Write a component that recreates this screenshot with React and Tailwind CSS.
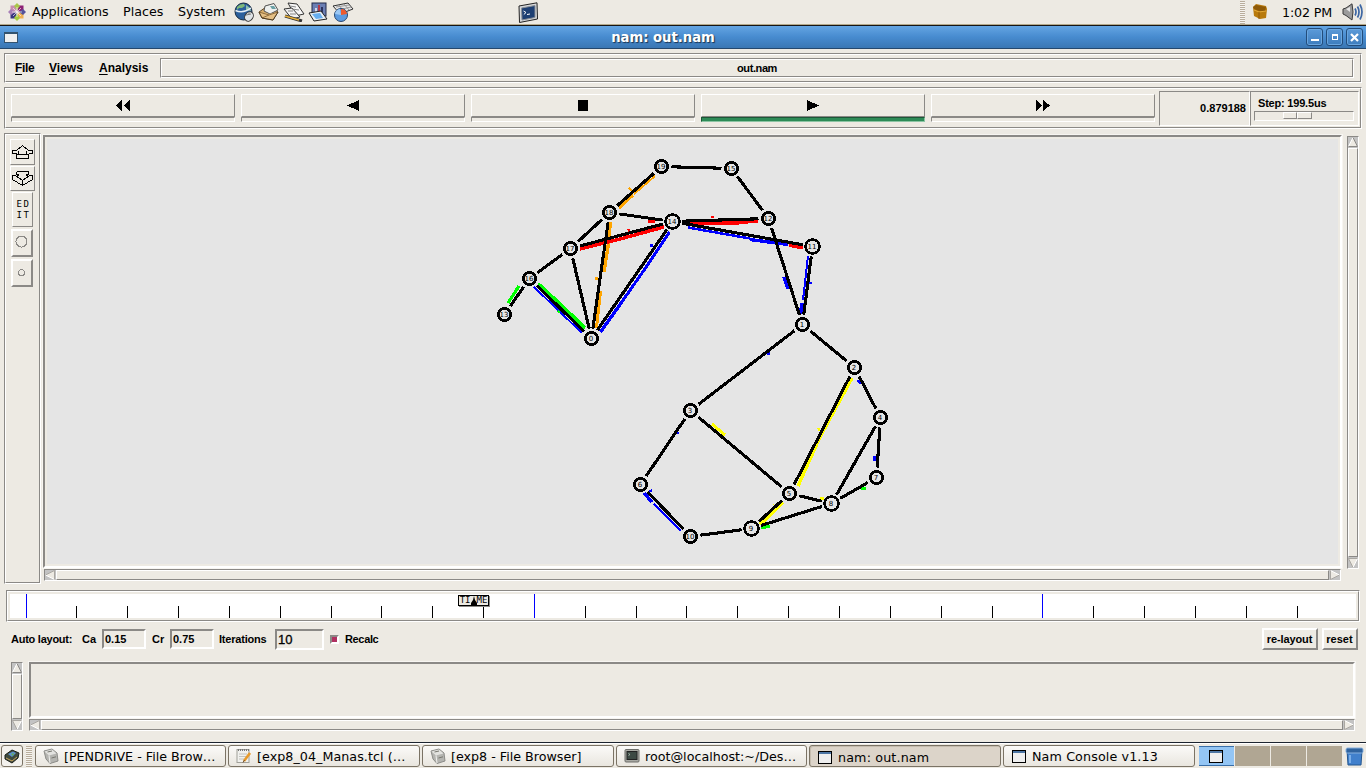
import React from "react";

const SUNK = "border border-t-[#8b8986] border-l-[#8b8986] border-b-white border-r-white";
const RAISED = "border border-t-white border-l-white border-b-[#8b8986] border-r-[#8b8986]";
const SUNK2 = "border-2 border-t-[#8b8986] border-l-[#8b8986] border-b-white border-r-white";
const RAISED2 = "border-2 border-t-white border-l-white border-b-[#8b8986] border-r-[#8b8986]";

function Groove({ className = "", inner = "", children }) {
  return (
    <div className={`${SUNK} flex ${className}`}>
      <div className={`${RAISED} flex min-w-0 flex-1 ${inner}`}>{children}</div>
    </div>
  );
}

function Arrow({ dir }) {
  const rot = { up: 0, right: 90, down: 180, left: 270 }[dir];
  return (
    <svg className="h-[10px] w-[10px] shrink-0" viewBox="0 0 10 10">
      <g transform={`rotate(${rot} 5 5)`}>
        <path d="M5 .5 L9.5 9.5 H.5Z" fill="#edeae3" />
        <path d="M5 .5 L.5 9.5" stroke="#fff" fill="none" />
        <path d="M5 .5 L9.5 9.5 H.5" stroke={dir === "up" ? "#8b8986" : "#aaa7a2"} fill="none" />
      </g>
    </svg>
  );
}

function Scrollbar({ vertical, className = "" }) {
  return (
    <div className={`${SUNK} flex gap-px bg-[#c3c3c3] ${vertical ? "w-3 flex-col" : "h-3"} ${className}`}>
      <Arrow dir={vertical ? "up" : "left"} />
      <div className={`${RAISED} flex-1 bg-[#edeae3]`} />
      <Arrow dir={vertical ? "down" : "right"} />
    </div>
  );
}

function GlobeIcon() {
  return (
    <svg width="21" height="20" viewBox="0 0 21 20">
      <circle cx="9.5" cy="9.5" r="8.5" fill="#2b5f9c" stroke="#16293d" />
      <path d="M3 5 Q6 1.500 10 2 L11 4 L8 6 L5 6 L3 8Z" fill="#7db87a" />
      <path d="M12 3 L16 6 L17 9 L12 8Z" fill="#8fc0b0" />
      <path d="M1.500 8.500 Q9 12 17 6" stroke="#e6eef5" strokeWidth="1.500" fill="none" />
      <ellipse cx="15" cy="14.5" rx="4" ry="5" fill="#dfe3e6" stroke="#333" transform="rotate(35 15 14.5)" />
      <path d="M12 13 L17 12 M15 12.500 L15 10" stroke="#777" />
    </svg>
  );
}
function MailIcon() {
  return (
    <svg width="22" height="20" viewBox="0 0 22 20">
      <path d="M1 10 L11 3 L20 10 L15 18 L4 16Z" fill="#d8ae6c" stroke="#5d4526" />
      <path d="M7 4 L16 1.500 L20 8 L12 12 L6 9Z" fill="#eef0ee" stroke="#555" />
      <path d="M12 4 L16 4 L18 7 L14 7Z" fill="#6aa0a5" />
      <path d="M1 10 L11 12 L20 10 L15 18 L4 16Z" fill="#e4bf84" />
      <path d="M1 10 L11 13 L20 10 M11 13 L4 16" stroke="#8f6c3c" fill="none" />
      <path d="M1 10 L4 16 L15 18 L20 10" stroke="#4d3a20" fill="none" />
    </svg>
  );
}
function WriterIcon() {
  return (
    <svg width="22" height="20" viewBox="0 0 22 20">
      <path d="M5 1 L14 2 L21 12 L12 14Z" fill="#f7f7f7" stroke="#333" />
      <path d="M1 7 L9 6 L17 15 L9 17Z" fill="#f2f2f2" stroke="#333" />
      <path d="M7 4 L13 5 M9 7 L16 8 M5 9 L10 9 M7 12 L13 12" stroke="#888" />
      <path d="M2 14 L19 19" stroke="#333" strokeWidth="3" />
      <path d="M2 14 L16 18" stroke="#e8b23c" strokeWidth="1.6" />
    </svg>
  );
}
function ImpressIcon() {
  return (
    <svg width="21" height="20" viewBox="0 0 21 20">
      <rect x="4" y="1" width="14" height="13" fill="#6b7fb4" stroke="#222a4a" />
      <rect x="7" y="6" width="2" height="6" fill="#d3d8ea" />
      <rect x="10" y="3" width="2" height="9" fill="#b33a4a" />
      <rect x="13" y="5" width="2" height="6" fill="#2a3260" />
      <path d="M1 11 L13 9 L19 17 L6 19Z" fill="#e7eef5" stroke="#222" />
      <path d="M4 12 L12 11 L15 16 L8 17Z" fill="#67aef0" />
    </svg>
  );
}
function CalcIcon() {
  return (
    <svg width="22" height="20" viewBox="0 0 22 20">
      <path d="M1 4 L16 1 L21 7 L8 12Z" fill="#e6e6e6" stroke="#333" />
      <path d="M4 5 L17 3 M6 8 L19 5 M7 3 L12 10 M12 2 L17 8" stroke="#999" />
      <circle cx="9" cy="13" r="6.5" fill="#5c9be0" stroke="#27466e" />
      <path d="M9 13 V7 A6 6 0 0 1 15 12Z" fill="#ee5a2c" />
      <path d="M9 13 L3 12 A6 6 0 0 1 8 7Z" fill="#9cc8f4" />
    </svg>
  );
}
function CentosIcon() {
  return (
    <svg width="18" height="18" viewBox="0 0 18 18">
      <rect x="2.5" y="2.5" width="6" height="6" fill="#c98bb0" />
      <rect x="9.5" y="2.5" width="6" height="6" fill="#8d2175" />
      <rect x="2.5" y="9.5" width="6" height="6" fill="#39367e" />
      <rect x="9.5" y="9.5" width="6" height="6" fill="#efb052" />
      <path d="M9 0 L12 3 L9 7 L6 3Z" fill="#a9c64a" />
      <path d="M9 11 L12 15 L9 18 L6 15Z" fill="#a5cc3e" />
      <path d="M0 9 L3 6 L7 9 L3 12Z" fill="#a880b8" />
      <path d="M11 9 L15 6 L18 9 L15 12Z" fill="#54539b" />
      <path d="M9 4 V14 M4 9 H14 M5 5 L13 13 M13 5 L5 13" stroke="#f5f0f0" strokeWidth=".7" />
    </svg>
  );
}
function ConsoleIcon() {
  return (
    <svg width="21" height="21" viewBox="0 0 21 21">
      <path d="M1 4 L19 .8 L19.5 17 L1.5 20.5Z" fill="#d6d8da" stroke="#222" />
      <path d="M3.5 6 L17 3.5 L17 15.5 L4 18Z" fill="#1d3f73" stroke="#8a8f96" />
      <path d="M5.5 9 L8 10.5 L5.8 12.5 M9 12.5 L12 12" stroke="#fff" fill="none" />
    </svg>
  );
}
function BoxIcon() {
  return (
    <svg width="16" height="16" viewBox="0 0 16 16">
      <path d="M1 3 L4 0 L14 2 L15 5 L14 14 L8 15 L2 12Z" fill="#b87a0c" />
      <path d="M1 3 L4 1 L14 3 L13 7 L7 7 L2 5Z" fill="#8e5a08" />
      <path d="M2 6 L7 8 L14 7" stroke="#e3a938" fill="none" />
      <path d="M7 8 V15" stroke="#8e5a08" />
    </svg>
  );
}
function SpeakerIcon() {
  return (
    <svg width="21" height="18" viewBox="0 0 21 18">
      <path d="M1 6 L4 5 L10 .8 Q12 9 10 17 L4 12.5 L1 11Z" fill="#9b9b9b" stroke="#3b3b3b" />
      <path d="M4 6 L8 4 V9Z" fill="#e6e6e6" />
      <path d="M13 5.500 Q15 9 13 12.500 M15.500 3.500 Q18.500 9 15.500 14.500 M18 1.500 Q22 9 18 16.500" stroke="#3c66a3" strokeWidth="1.7" fill="none" />
    </svg>
  );
}
function WindowIcon() {
  return (
    <svg width="14" height="13" viewBox="0 0 14 13" shapeRendering="crispEdges">
      <rect width="14" height="13" fill="#000" />
      <rect x="1" y="1" width="12" height="11" fill="#efefef" />
      <rect x="1" y="1" width="12" height="2" fill="#4d76a5" />
    </svg>
  );
}
function FolderIcon() {
  return (
    <svg width="16" height="16" viewBox="0 0 16 16">
      <path d="M1 3 L9 1 L14 5 L15 13 L7 15.500 L3 11Z" fill="#b4b4b0" stroke="#8b8b87" />
      <path d="M1.500 3.500 L9 1.500 L13.500 5.500 L6 7.500Z" fill="#e2e2df" />
      <path d="M6 7.500 L7 15" stroke="#f0f0ee" />
      <path d="M8.500 10 L13 8.800 M4.500 4 L9 3" stroke="#77776f" />
    </svg>
  );
}
function NotepadIcon() {
  return (
    <svg width="16" height="16" viewBox="0 0 16 16">
      <rect x="1" y="1.500" width="12" height="13" fill="#f1f1ee" stroke="#a09f98" />
      <path d="M2 2 H13" stroke="#777" strokeWidth="2" strokeDasharray="1 1" />
      <path d="M3 6 H11 M3 8.500 H11 M3 11 H8" stroke="#c2c2bd" />
      <path d="M14 5 L8 13" stroke="#e79a2c" strokeWidth="2.600" />
      <path d="M8.500 12 L7 14.500" stroke="#6b4a28" />
    </svg>
  );
}
function TerminalIcon() {
  return (
    <svg width="16" height="16" viewBox="0 0 16 16">
      <rect x="1" y="1.500" width="14" height="12.500" rx="1" fill="#a9aaa4" stroke="#6c6d68" />
      <rect x="3" y="3.500" width="10" height="8" fill="#3d4a44" stroke="#222" />
      <path d="M4.500 5.500 L6 6.500 L4.500 7.500" stroke="#b5c8ba" fill="none" strokeWidth=".8" />
    </svg>
  );
}
function DesktopIcon() {
  return (
    <svg width="16" height="15" viewBox="0 0 16 15">
      <path d="M1 6 L8 1 L15 4 L14 9 L8 14 L1 10Z" fill="#3f4a3d" stroke="#1c201a" />
      <path d="M4 5 L9 2.500 L12 4 L8 8Z" fill="#5b8fd0" />
      <path d="M7 5 L10 4 L9 7Z" fill="#67b04c" />
      <path d="M2 9 L8 12 L13 8" stroke="#c9a55f" fill="none" />
    </svg>
  );
}
function TrashIcon() {
  return (
    <svg width="19" height="19" viewBox="0 0 19 19">
      <path d="M2 3 H17 L16 18 H3Z" fill="#4180cc" stroke="#24568f" />
      <rect x="1" y="1" width="17" height="5" rx="1.500" fill="#2f639f" stroke="#88b1de" />
      <path d="M5 8 V16" stroke="#7bafe9" strokeWidth="2" />
    </svg>
  );
}

const nodes = {
  0: [591.5, 338.5], 1: [802.5, 324.5], 2: [854.5, 367.5], 3: [690.5, 410.5], 4: [880.5, 417.5],
  5: [789.5, 493.5], 6: [640.5, 484.5], 7: [876.5, 477.5], 8: [831.5, 503.5, 1], 9: [751.5, 528.5, 1],
  10: [690.5, 536.5], 11: [812.5, 246.5, 1], 12: [768.5, 218.5], 13: [504.5, 314.5], 14: [672.5, 221.5, 1],
  15: [731.5, 168.5], 16: [529.5, 278.5], 17: [570.5, 248.5], 18: [609.5, 212.5], 19: [661.5, 166.5],
};
const links = [
  [19, 15], [15, 12], [19, 18], [18, 14], [18, 17], [17, 14], [17, 16], [16, 13], [16, 0], [17, 0],
  [18, 0], [14, 0], [14, 12], [14, 11], [12, 1], [11, 1], [1, 3], [1, 2], [2, 4], [2, 5], [4, 7],
  [4, 8], [7, 8], [5, 8], [3, 5], [3, 6], [6, 10], [10, 9], [9, 5], [9, 8],
];
const O = "#ffa500", R = "#ff0000", B = "#0000ff", G = "#00ff00", Y = "#ffff00";
const packets = [
  [655, 176, 634, 194, O, 2], [633, 195, 619, 208, O, 3], [629, 188, 632, 191, O, 2],
  [610.5, 222, 608, 247, O, 3.3], [608, 247, 604, 272, O, 3.3], [600.5, 291, 596.5, 328, O, 3], [595, 278.5, 598, 278.5, O, 3],
  [580, 249, 620, 239, R, 3.4], [620, 239, 664, 227, R, 3.4], [648, 221, 655, 221, R, 3], [628, 229, 630, 232, R, 2],
  [682, 223.5, 748, 222.7, R, 3.4], [748, 222, 758, 221.5, R, 3], [711, 217, 714, 217, R, 2],
  [688, 227.5, 750, 238.5, B, 2.5], [750, 239.5, 788, 244.5, B, 3.4], [789, 245.5, 803, 248, R, 3],
  [669.5, 232, 645.5, 268, B, 3], [645.5, 268, 622.5, 301, B, 3], [622.5, 301, 600.5, 332, B, 3.4], [650, 245.5, 653, 245.5, B, 3],
  [538, 284, 549, 294, G, 4], [549, 294, 585, 328, G, 4], [534, 287, 582, 333, B, 2], [558, 311, 560, 313, G, 2],
  [519, 286, 508, 303, G, 3.2],
  [784, 277, 788, 289, B, 3.2], [808, 256, 803, 300, B, 2], [802, 303, 801, 314, B, 4], [809, 283, 812, 283, B, 2],
  [767, 353.5, 770, 353.5, B, 3], [675, 433, 679, 433, B, 2], [858, 380, 861, 384, B, 3], [874.5, 456, 874.5, 461, B, 4],
  [644, 493, 652, 502, B, 3.5], [654, 504, 681, 531, B, 2.6], [649, 492, 652, 490, B, 2],
  [852, 378, 820, 437, Y, 3.4], [820, 437, 798, 486, Y, 3.4], [818, 428, 820, 431, Y, 2],
  [712, 424, 725, 435, Y, 3], [783, 502.5, 760, 524.5, Y, 3.6], [773, 504, 775, 506, Y, 1], [820, 498, 824, 498, Y, 3],
  [761, 528, 770, 526, G, 3], [861, 488, 866, 488, G, 3],
];

function Topology() {
  return (
    <svg className="block h-full w-full" viewBox="47 139 1291 425" preserveAspectRatio="xMinYMin meet">
      <g shapeRendering="crispEdges">
        {packets.map(([x1, y1, x2, y2, c, w], i) => (
          <line key={i} x1={x1} y1={y1} x2={x2} y2={y2} stroke={c} strokeWidth={w} />
        ))}
        {links.map(([a, b]) => {
          const [x1, y1] = nodes[a];
          const [x2, y2] = nodes[b];
          const d = Math.hypot(x2 - x1, y2 - y1);
          const ux = ((x2 - x1) / d) * 10;
          const uy = ((y2 - y1) / d) * 10;
          return <line key={`${a}-${b}`} x1={x1 + ux} y1={y1 + uy} x2={x2 - ux} y2={y2 - uy} stroke="#000" strokeWidth="3.100" />;
        })}
        {Object.entries(nodes).map(([id, [x, y, big]]) => (
          <circle key={id} cx={x} cy={y} r={big ? 7 : 6.2} fill="#e5e5e5" stroke="#000" strokeWidth="2.5" />
        ))}
      </g>
      {Object.entries(nodes).map(([id, [x, y]]) => (
        <text key={id} x={x - 0.5} y={y + 2.5} textAnchor="middle" fontFamily="'DejaVu Sans', sans-serif" fontWeight="400" fontSize="7">
          {id}
        </text>
      ))}
    </svg>
  );
}

const playIcons = [
  "M122 100 V111 L116 105.5Z M130 100 V111 L124 105.5Z",
  "M129 100 V111 L117 105.5Z",
  "M118 100 H128 V111 H118Z",
  "M117 100 V111 L129 105.5Z",
  "M116 100 V111 L122 105.5Z M123 100 V111 L130 105.5Z",
];

function PlayButton({ d, active }) {
  return (
    <div className="w-56">
      <div className={`${RAISED} flex h-[23px] justify-center`}>
        <svg className="mt-[5px] h-[12px] w-[18px]" viewBox="114 100 18 12" shapeRendering="crispEdges">
          <path d={d} />
        </svg>
      </div>
      <div className={`h-[5px] border ${active ? "border-t-[#1d5737] border-l-[#1d5737] border-r-[#8cc5a4] border-b-[#8cc5a4] bg-[#2e8b57]" : "border-t-[#8b8986] border-l-[#8b8986] border-r-white border-b-white"}`} />
    </div>
  );
}

function TimeSlider() {
  return (
    <div className="relative h-6 flex-1 bg-white">
      <svg className="block h-6 w-full" viewBox="10 594 1346 24" preserveAspectRatio="xMinYMin slice" shapeRendering="crispEdges">
        {Array.from({ length: 26 }, (_, i) => {
          const x = Math.floor(26 + i * 50.845);
          const major = i % 10 === 0;
          return <rect key={i} x={x} y={major ? 594 : 606} width="1" height={major ? 24 : 12} fill={major ? B : "#000"} />;
        })}
      </svg>
      <div className="absolute top-px left-[448px] flex h-[11px] w-[31px] items-center justify-center border border-black bg-[#edeae3] font-['DejaVu_Sans_Mono',monospace] text-[9px] leading-none font-normal shadow-[1px_1px_0_#8b8986]">
        <span>TI</span>
        <svg width="6" height="9" viewBox="0 0 6 9">
          <path d="M3 0 L4 4 L6 7 V9 H0 V7 L2 4Z" />
        </svg>
        <span>ME</span>
      </div>
    </div>
  );
}

function Task({ icon, label, active, className = "" }) {
  return (
    <div
      className={`flex h-[22px] items-center overflow-hidden rounded-[3px] border border-[#7b7365] pl-[7px] whitespace-pre ${active ? "bg-[#dcd4c9] pt-[2px] shadow-[inset_1px_1px_0_#c5bcae]" : "bg-linear-to-b from-[#fbfaf8] to-[#e9e6df]"} ${className}`}
    >
      <span className="mr-[5px] flex w-4 justify-center">{icon}</span>
      <span className="pt-[2px]">{label}</span>
    </div>
  );
}

const titleBtn = "flex h-[18px] w-[17px] items-center justify-center rounded-[3px] border border-[#234d7b] bg-linear-to-b from-[#5b9ad9] to-[#3d7dbd] shadow-[inset_0_0_0_1px_#6aa6df]";

export default function App() {
  return (
    <div className="flex h-[768px] w-[1366px] flex-col overflow-hidden bg-[#edeae3] font-['DejaVu_Sans',sans-serif] text-[12.7px] leading-none text-black">
      <header className="flex h-[26px] shrink-0 items-start border-b border-[#151515] shadow-[inset_0_-1px_0_#b3a98b]">
        <div className="flex h-6 flex-1 items-center pl-2">
          <CentosIcon />
          <span className="ml-[6px] w-[91px] pt-px tracking-[-0.08px]">Applications</span>
          <span className="w-[55px] pt-px">Places</span>
          <span className="w-[56px] pt-px">System</span>
          <div className="flex gap-[3px]">
            <GlobeIcon />
            <MailIcon />
            <WriterIcon />
            <ImpressIcon />
            <CalcIcon />
          </div>
          <div className="ml-[164px]">
            <ConsoleIcon />
          </div>
        </div>
        <div className="flex h-6 items-center">
          <div className="mr-[7px] h-[23px] w-[5px] bg-[repeating-linear-gradient(180deg,#b8ad9c_0_1px,#f5f3ef_1px_2px)]" />
          <BoxIcon />
          <span className="ml-[14px] w-[60px] pt-[2px] tracking-[-0.15px] whitespace-nowrap">1:02 PM</span>
          <div className="mr-[3px]"><SpeakerIcon /></div>
        </div>
      </header>

      <div className="flex h-[23px] shrink-0 items-center border-b border-[#25486d] bg-linear-to-b from-[#64a5e3] via-[#478bcf] to-[#3a77b4] pr-[3px] pl-1">
        <div className="h-[11px] w-[14px] border border-t-2 border-[#33536f] bg-[#f0f0f0]" />
        <div className="flex-1 pl-[2px] pt-px text-center text-[13.2px] font-bold text-white [text-shadow:1px_1px_1px_#1c3450]">nam: out.nam</div>
        <div className="flex gap-[3px]">
          <div className={titleBtn}><div className="mt-[6px] h-[2px] w-2 bg-white" /></div>
          <div className={titleBtn}><div className="h-[6px] w-[6px] border border-t-2 border-white" /></div>
          <div className={titleBtn}>
            <svg width="9" height="9" viewBox="0 0 9 9"><path d="M1 1 L8 8 M8 1 L1 8" stroke="#fff" strokeWidth="2.200" /></svg>
          </div>
        </div>
      </div>

      <main className="flex flex-1 flex-col font-['Liberation_Sans',sans-serif] text-[11px] font-bold">
        <Groove className="mt-1 ml-1 h-[30px] w-[1358px] shrink-0" inner="items-center pl-[9px] pr-[6px] text-[12px]">
          <span className="w-[34px] tracking-[-0.3px] underline-offset-2"><u>F</u>ile</span>
          <span className="w-[50px] underline-offset-2"><u>V</u>iews</span>
          <span className="w-[61px] underline-offset-2"><u>A</u>nalysis</span>
          <Groove className="h-5 flex-1" inner="items-center justify-center pt-px text-[11px] tracking-[-0.4px]">out.nam</Groove>
        </Groove>

        <Groove className="mt-1 ml-1 h-[42px] w-[1358px] shrink-0" inner="pl-[5px] pt-[5px]">
          <div className="flex gap-[6px]">
            {playIcons.map((d, i) => <PlayButton key={i} d={d} active={i === 3} />)}
          </div>
          <div className={`${SUNK} -mt-[3px] ml-[4px] flex h-[35px] w-[91px] items-center justify-end pr-[3px]`}>0.879188</div>
          <div className={`${SUNK} -mt-[3px] h-[35px] w-[109px] pt-[6px] pl-[3px]`}>
            <div className="h-[13px] pl-1 tracking-[-0.2px]">Step: 199.5us</div>
            <div className={`${SUNK} h-[10px] w-[100px] pl-7`}>
              <div className="flex">
                <div className={`${RAISED} h-[7px] w-[14px]`} />
                <div className={`${RAISED} h-[7px] w-[15px]`} />
              </div>
            </div>
          </div>
        </Groove>

        <div className="mt-1 flex h-[451px] shrink-0 pl-1">
          <Groove className="h-[451px] w-[37px]" inner="flex-col items-center pt-1">
            <div className={`${RAISED} flex h-[26px] w-[25px] items-center justify-center`}>
              <svg width="23" height="16" viewBox="0 0 23 16" fill="none" stroke="#000" shapeRendering="crispEdges">
                <path d="M11.500 1.500 L17.500 6.500 H21.500 V9.500 H17.500 M11.500 1.500 L5.500 6.500 H1.500 V9.500 H5.500 M5.500 10.500 H17.500 V14.500 H5.500Z M7.500 6.500 V10.500 M15.500 6.500 V10.500" />
              </svg>
            </div>
            <div className={`${RAISED} mt-px flex h-[25px] w-[25px] items-center justify-center`}>
              <svg width="23" height="16" viewBox="0 0 23 16" fill="none" stroke="#000" shapeRendering="crispEdges">
                <path d="M5.500 .5 H17.500 V3.500 L15.500 4.500 M5.500 .5 V3.500 L7.500 4.500 M7.500 2.500 V4.500 M15.500 2.500 V4.500 M1.500 4.500 H4.500 L11.500 9.500 L18.500 4.500 H21.500 V8.500 L11.500 14.500 L1.500 8.500Z M11.500 9.500 V14.500" />
              </svg>
            </div>
            <div className={`${RAISED} mt-px flex h-[35px] w-[21px] flex-col items-center justify-center gap-[3px] font-['DejaVu_Sans_Mono',monospace] text-[9px] leading-[8px] font-normal`}>
              <span className="pl-[2px] tracking-[1.5px]">ED</span>
              <span className="pl-[2px] tracking-[1.5px]">IT</span>
            </div>
            <div className={`${RAISED2} mt-[2px] mr-px flex h-[28px] w-[22px] items-center justify-center pr-px pb-[3px]`}>
              <svg width="13" height="13" shapeRendering="crispEdges"><circle cx="6.500" cy="6.500" r="5.500" fill="none" stroke="#8b8986" /></svg>
            </div>
            <div className={`${RAISED2} mt-[2px] mr-px flex h-[28px] w-[22px] items-center justify-center pr-px pb-px`}>
              <svg width="7" height="7" shapeRendering="crispEdges"><circle cx="3.500" cy="3.500" r="3" fill="none" stroke="#8b8986" /></svg>
            </div>
          </Groove>
          <div className="ml-[2px] w-[1299px] pt-[2px]">
            <div className={`${SUNK2} h-[433px] p-[2px] outline outline-1 outline-[#f7f5f1]`}>
              <div className="h-full bg-[#e5e5e5]"><Topology /></div>
            </div>
            <Scrollbar className="mx-px mt-px" />
          </div>
          <Scrollbar vertical className="mt-[3px] ml-[5px] h-[433px]" />
        </div>

        <Groove className="mt-[6px] ml-[6px] h-8 w-[1354px] shrink-0" inner="p-[2px]">
          <TimeSlider />
        </Groove>

        <div className="mt-[6px] flex h-[22px] shrink-0 items-center pr-2 pl-[11px]">
          <span className="w-[71px] whitespace-nowrap tracking-[-0.25px]">Auto layout:</span>
          <span className="w-[20px]">Ca</span>
          <div className={`${SUNK2} flex h-5 w-[44px] items-center pl-[1px]`}>0.15</div>
          <span className="ml-[6px] w-[18px]">Cr</span>
          <div className={`${SUNK2} flex h-5 w-[44px] items-center pl-[1px]`}>0.75</div>
          <span className="ml-[5px] w-[56px] tracking-[-0.2px]">Iterations</span>
          <div className={`${SUNK2} flex h-[21px] w-[49px] items-center pl-[1px] text-[13px] font-normal [-webkit-text-stroke:0.3px_black]`}>10</div>
          <div className={`${SUNK2} ml-[6px] h-[9px] w-[9px] bg-[#b03060]`} />
          <span className="ml-[6px] flex-1 tracking-[-0.35px]">Recalc</span>
          <div className={`${RAISED2} flex h-[22px] w-[56px] items-center justify-center pr-px tracking-[-0.1px]`}>re-layout</div>
          <div className={`${RAISED2} ml-1 flex h-[22px] w-[36px] items-center justify-center pr-px`}>reset</div>
        </div>

        <div className="mt-[11px] flex h-[70px] shrink-0 pl-[11px]">
          <Scrollbar vertical className="mt-px h-[69px]" />
          <div className="ml-[6px] w-[1326px] pt-px">
            <div className={`${SUNK2} h-[56px] outline outline-1 outline-[#f7f5f1]`} />
            <Scrollbar className="mt-px h-3" />
          </div>
        </div>
      </main>

      <footer className="flex h-[26px] shrink-0 items-start border-t border-[#1c2430] pt-[2px] pl-px shadow-[inset_0_1px_0_#fff]">
        <div className="flex h-[22px] w-[22px] items-center justify-center rounded-[3px] border border-[#7b7365] bg-[#f3f1ed]"><DesktopIcon /></div>
        <div className="mt-px ml-[3px] h-[22px] w-[6px] bg-[repeating-linear-gradient(180deg,#b8ad9c_0_1px,#f5f3ef_1px_2px)]" />
        <Task className="ml-[3px] w-[191px]" icon={<FolderIcon />} label="[PENDRIVE - File Brow…" />
        <Task className="ml-[2px] w-[192px] tracking-[0.05px]" icon={<NotepadIcon />} label="[exp8_04_Manas.tcl (…" />
        <Task className="ml-[2px] w-[192px]" icon={<FolderIcon />} label="[exp8 - File Browser]" />
        <Task className="ml-[2px] w-[191px]" icon={<TerminalIcon />} label="root@localhost:~/Des…" />
        <Task className="ml-[2px] w-[192px] tracking-[0.15px]" icon={<WindowIcon />} label="nam: out.nam" active />
        <Task className="ml-[2px] w-[192px] tracking-[0.12px]" icon={<WindowIcon />} label="Nam Console v1.13" />
        <div className="mt-px ml-1 flex gap-px">
          <div className="flex h-5 w-[35px] items-center justify-center border-y border-[#3a6fa8] bg-[#93c5f4] pr-px"><WindowIcon /></div>
          <div className="h-5 w-[35px] bg-[#b0a693]" />
          <div className="h-5 w-[35px] bg-[#b0a693]" />
          <div className="h-5 w-[35px] bg-[#b0a693]" />
        </div>
        <div className="mt-[2px] ml-[3px]"><TrashIcon /></div>
      </footer>
    </div>
  );
}
